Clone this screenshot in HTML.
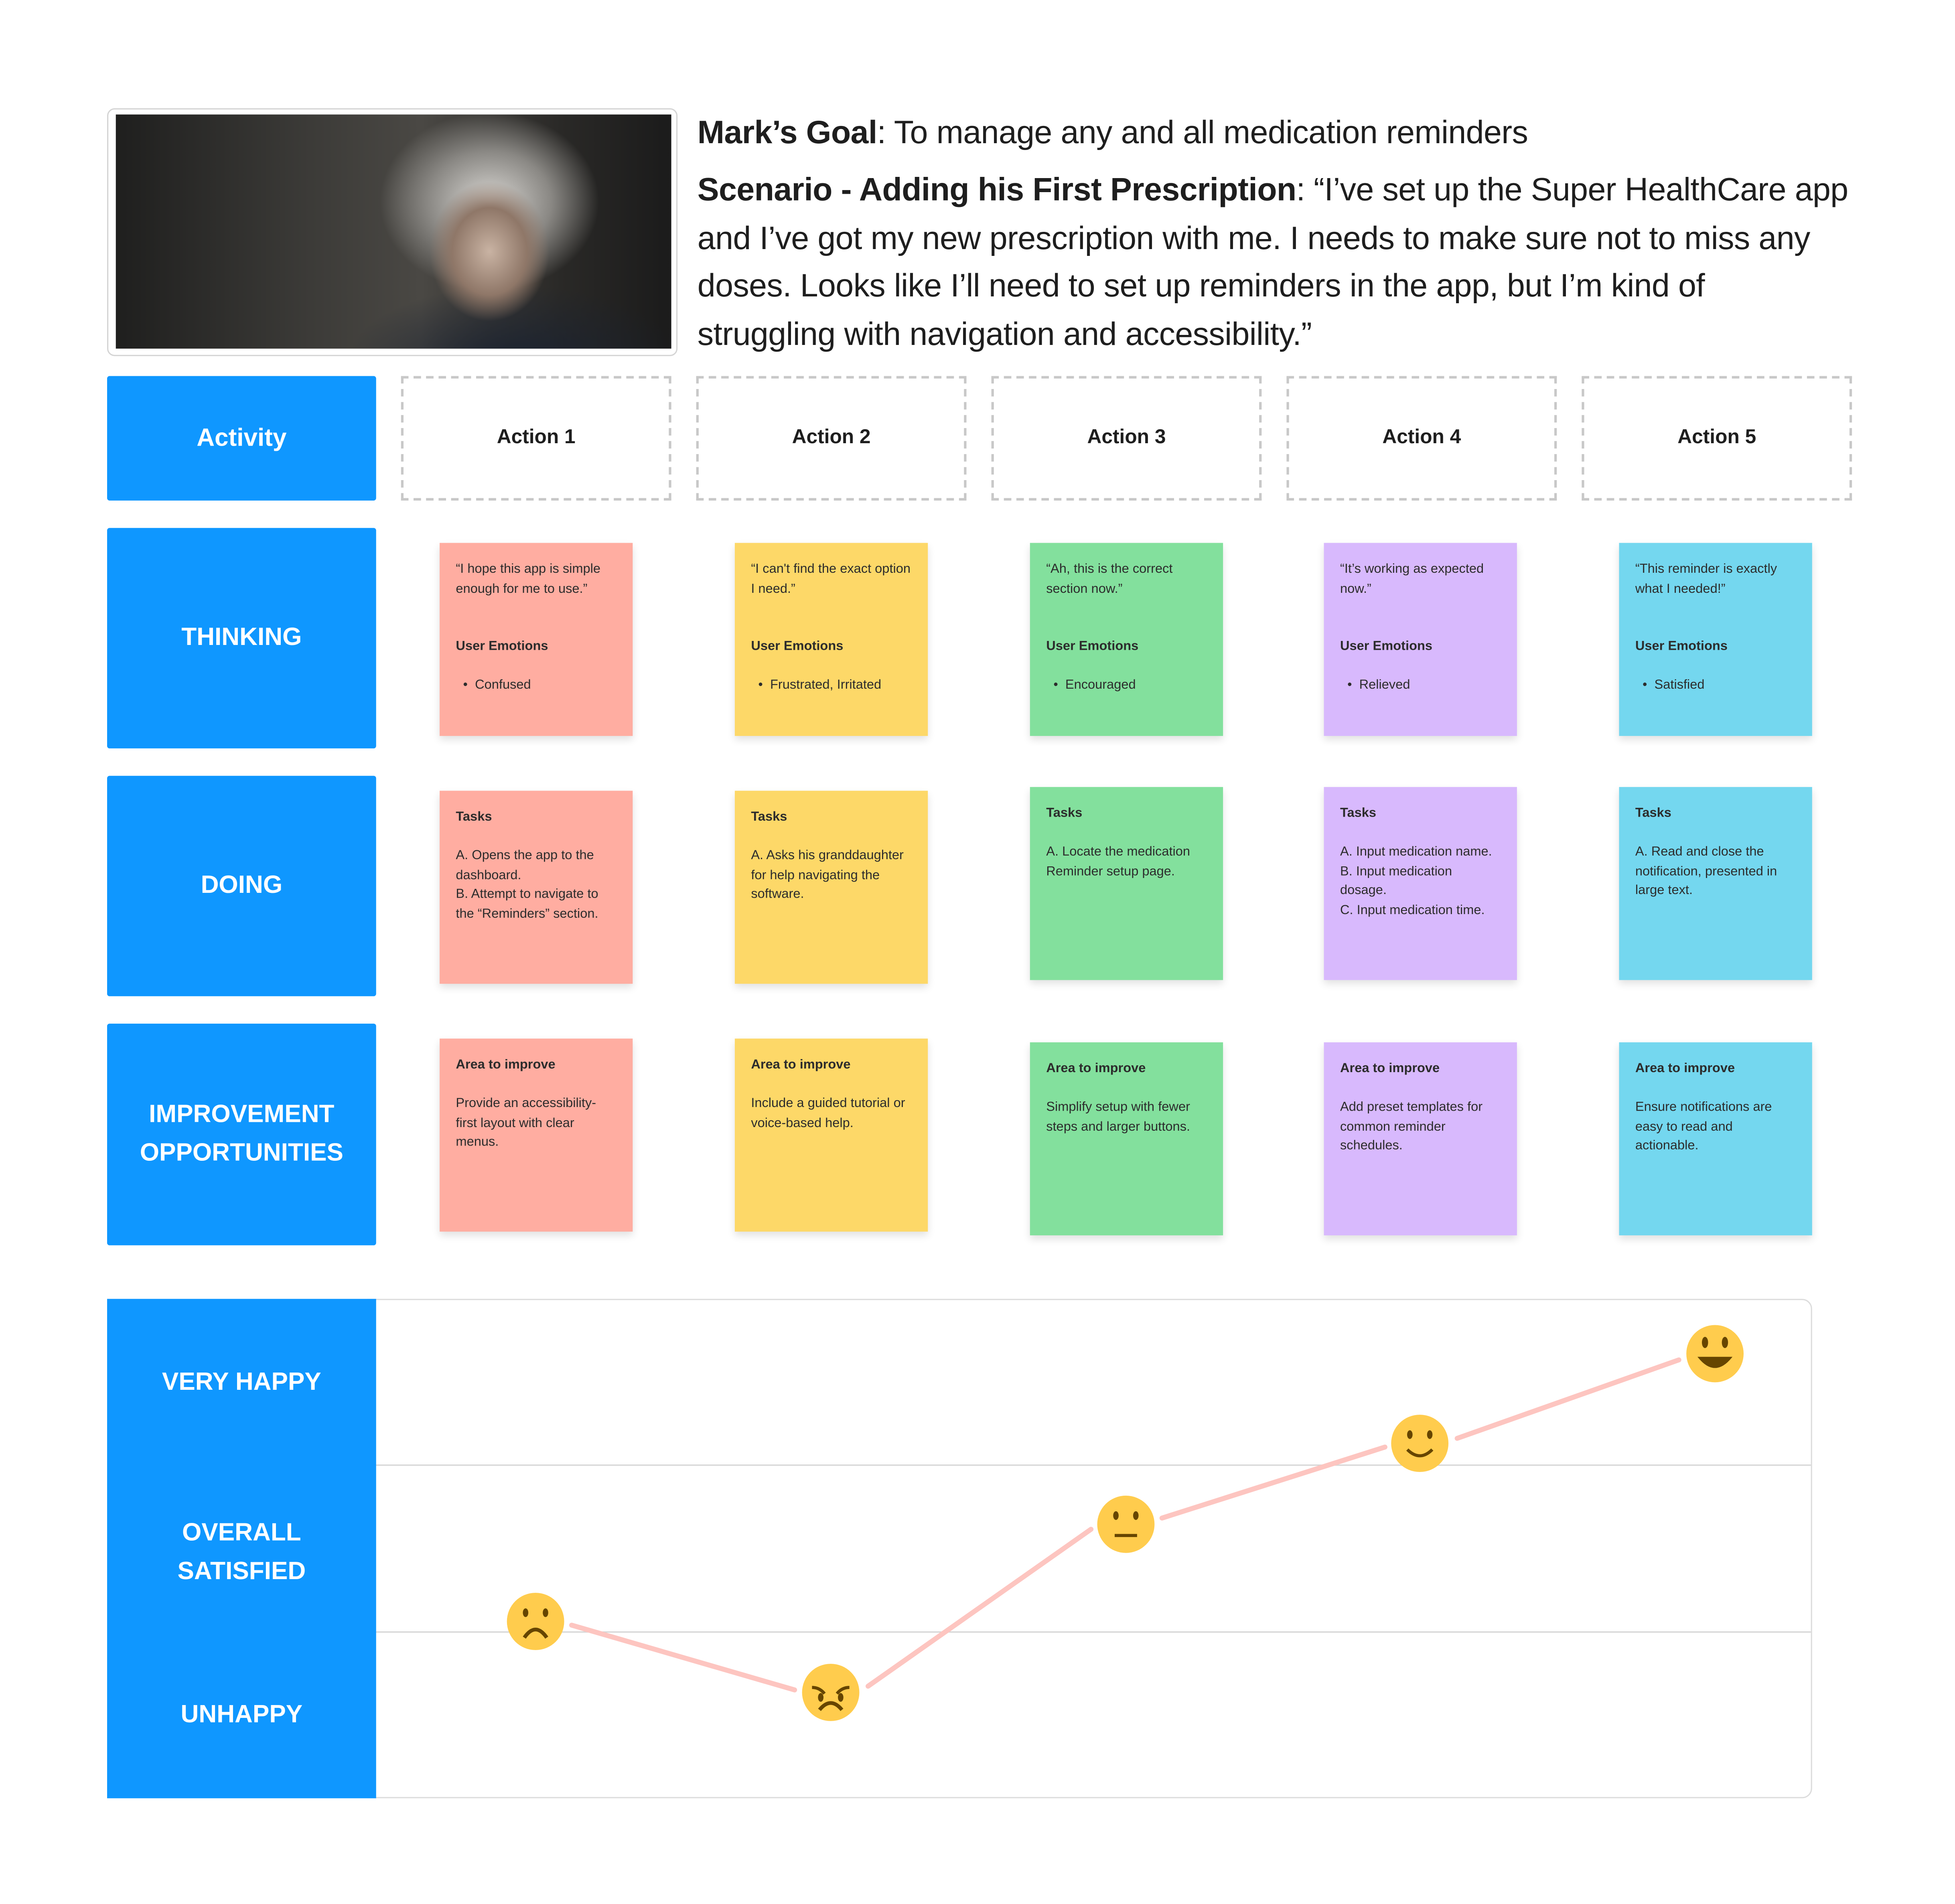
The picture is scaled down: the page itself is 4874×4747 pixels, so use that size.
<!DOCTYPE html>
<html><head><meta charset="utf-8"><style>
html,body{margin:0;padding:0;background:#fff;}
body{width:4874px;height:4741px;overflow:hidden;}
#w{position:absolute;left:0;top:6px;width:1570px;height:1527px;transform:scale(3.105);transform-origin:0 0;font-family:"Liberation Sans",sans-serif;color:#1e1e1e;}
.a{position:absolute;box-sizing:border-box;}
.lab{background:#0f97ff;color:#fff;font-weight:bold;font-size:20px;display:flex;align-items:center;justify-content:center;text-align:center;line-height:31px;border-radius:2px;}
.act{border:2px dashed #c8c8c8;display:flex;align-items:center;justify-content:center;font-size:16px;font-weight:bold;color:#1e1e1e;}
.n{width:155px;height:155px;padding:14px 13px;font-size:10.5px;line-height:15.5px;color:#2c2c2c;box-shadow:0 3px 6px rgba(0,0,0,.12);}
.n b{display:block;}
.p{background:#ffada1}.y{background:#fdd868}.g{background:#83e09d}.u{background:#d8b9fd}.c{background:#74d7ef}
.txt{font-size:26px;line-height:38.6px;color:#1e1e1e;letter-spacing:-0.2px;white-space:nowrap;}
</style></head><body><div id="w">
<div class="a" style="left:86px;top:85px;width:458px;height:199px;border:1px solid #d4d4d4;border-radius:6px;"></div>
<div class="a" style="left:93px;top:90px;width:446px;height:188px;background:radial-gradient(ellipse 60px 70px at 300px 110px,#c9b3a3 0%,#8f7768 50%,transparent 80%),radial-gradient(ellipse 110px 90px at 300px 70px,#d8d6d2 0%,#8a8884 45%,transparent 80%),radial-gradient(ellipse 150px 70px at 320px 200px,#1a2230 0%,transparent 90%),linear-gradient(90deg,#1f1f1e,#3c3b38 35%,#4a4844 55%,#2a2927 80%,#1b1b1b);"></div>
<div class="a txt" style="left:560px;top:85px;"><b>Mark’s Goal</b>: To manage any and all medication reminders</div>
<div class="a txt" style="left:560px;top:131px;"><b>Scenario - Adding his First Prescription</b>: “I’ve set up the Super HealthCare app<br>and I’ve got my new prescription with me. I needs to make sure not to miss any<br>doses. Looks like I’ll need to set up reminders in the app, but I’m kind of<br>struggling with navigation and accessibility.”</div>

<div class="a lab" style="left:86px;top:300px;width:216px;height:100px;">Activity</div>
<div class="a lab" style="left:86px;top:422px;width:216px;height:177px;">THINKING</div>
<div class="a lab" style="left:86px;top:621px;width:216px;height:177px;">DOING</div>
<div class="a lab" style="left:86px;top:820px;width:216px;height:178px;">IMPROVEMENT<br>OPPORTUNITIES</div>

<div class="a act" style="left:322px;top:300px;width:217px;height:100px;">Action 1</div>
<div class="a act" style="left:559px;top:300px;width:217px;height:100px;">Action 2</div>
<div class="a act" style="left:796px;top:300px;width:217px;height:100px;">Action 3</div>
<div class="a act" style="left:1033px;top:300px;width:217px;height:100px;">Action 4</div>
<div class="a act" style="left:1270px;top:300px;width:217px;height:100px;">Action 5</div>

<div class="a n p" style="left:353px;top:434px;">“I hope this app is simple enough for me to use.”<br><br><br><b>User Emotions</b><br>&nbsp;&nbsp;•&nbsp; Confused</div>
<div class="a n y" style="left:590px;top:434px;">“I can't find the exact option I need.”<br><br><br><b>User Emotions</b><br>&nbsp;&nbsp;•&nbsp; Frustrated, Irritated</div>
<div class="a n g" style="left:827px;top:434px;">“Ah, this is the correct section now.”<br><br><br><b>User Emotions</b><br>&nbsp;&nbsp;•&nbsp; Encouraged</div>
<div class="a n u" style="left:1063px;top:434px;">“It’s working as expected now.”<br><br><br><b>User Emotions</b><br>&nbsp;&nbsp;•&nbsp; Relieved</div>
<div class="a n c" style="left:1300px;top:434px;">“This reminder is exactly what I needed!”<br><br><br><b>User Emotions</b><br>&nbsp;&nbsp;•&nbsp; Satisfied</div>

<div class="a n p" style="left:353px;top:633px;"><b>Tasks</b><br>A. Opens the app to the dashboard.<br>B. Attempt to navigate to the “Reminders” section.</div>
<div class="a n y" style="left:590px;top:633px;"><b>Tasks</b><br>A. Asks his granddaughter for help navigating the software.</div>
<div class="a n g" style="left:827px;top:630px;"><b>Tasks</b><br>A. Locate the medication Reminder setup page.</div>
<div class="a n u" style="left:1063px;top:630px;"><b>Tasks</b><br>A. Input medication name.<br>B. Input medication dosage.<br>C. Input medication time.</div>
<div class="a n c" style="left:1300px;top:630px;"><b>Tasks</b><br>A. Read and close the notification, presented in large text.</div>

<div class="a n p" style="left:353px;top:832px;"><b>Area to improve</b><br>Provide an accessibility-first layout with clear menus.</div>
<div class="a n y" style="left:590px;top:832px;"><b>Area to improve</b><br>Include a guided tutorial or voice-based help.</div>
<div class="a n g" style="left:827px;top:835px;"><b>Area to improve</b><br>Simplify setup with fewer steps and larger buttons.</div>
<div class="a n u" style="left:1063px;top:835px;"><b>Area to improve</b><br>Add preset templates for common reminder schedules.</div>
<div class="a n c" style="left:1300px;top:835px;"><b>Area to improve</b><br>Ensure notifications are easy to read and actionable.</div>

<div class="a" style="left:295px;top:1041px;width:1160px;height:401px;border:1px solid #dcdcdc;border-radius:0 8px 8px 0;"></div>
<div class="a" style="left:302px;top:1174px;width:1152px;height:1px;background:#d4d4d4;"></div>
<div class="a" style="left:302px;top:1308px;width:1152px;height:1px;background:#d4d4d4;"></div>
<div class="a lab" style="left:86px;top:1041px;width:216px;height:401px;border-radius:0;display:block;">
<div style="position:absolute;top:52px;width:100%;">VERY HAPPY</div>
<div style="position:absolute;top:173px;width:100%;">OVERALL<br>SATISFIED</div>
<div style="position:absolute;top:319px;width:100%;">UNHAPPY</div>
</div>
<svg class="a" style="left:0;top:0;" width="1570" height="1527">
<g stroke="#fdc5c0" stroke-width="4" stroke-linecap="round" fill="none">
<line x1="459" y1="1303" x2="638" y2="1355"/>
<line x1="697" y1="1352" x2="876" y2="1226"/>
<line x1="933" y1="1217" x2="1112" y2="1160"/>
<line x1="1170" y1="1153" x2="1348" y2="1090"/>
</g>
<g fill="#ffcc4d"><circle cx="430" cy="1300" r="23"/><circle cx="667" cy="1357" r="23"/><circle cx="904" cy="1222" r="23"/><circle cx="1140" cy="1157" r="23"/><circle cx="1377" cy="1085" r="23"/></g>
<g fill="#664500" stroke="#664500">
<ellipse cx="422" cy="1293" rx="2.2" ry="3.5" stroke="none"/><ellipse cx="438" cy="1293" rx="2.2" ry="3.5" stroke="none"/>
<path d="M421 1313 Q430 1300 439 1313" fill="none" stroke-width="3"/>
<ellipse cx="659" cy="1361" rx="2.2" ry="3.5" stroke="none"/><ellipse cx="675" cy="1361" rx="2.2" ry="3.5" stroke="none"/>
<path d="M652 1353 Q658 1353 662 1358 M682 1353 Q676 1353 672 1358" fill="none" stroke-width="2.5"/>
<path d="M658 1371 Q667 1360 676 1371" fill="none" stroke-width="3"/>
<ellipse cx="896" cy="1215" rx="2.2" ry="3.5" stroke="none"/><ellipse cx="912" cy="1215" rx="2.2" ry="3.5" stroke="none"/>
<line x1="895" y1="1231" x2="913" y2="1231" stroke-width="2.5"/>
<ellipse cx="1132" cy="1150" rx="2.2" ry="3.5" stroke="none"/><ellipse cx="1148" cy="1150" rx="2.2" ry="3.5" stroke="none"/>
<path d="M1130 1162 Q1140 1172 1150 1162" fill="none" stroke-width="2.5"/>
<ellipse cx="1369" cy="1076" rx="2.5" ry="4.5" stroke="none"/><ellipse cx="1385" cy="1076" rx="2.5" ry="4.5" stroke="none"/>
<path d="M1364 1088 Q1377 1104 1390 1088 Z" stroke-width="1"/>
</g>
</svg>
</div></body></html>
